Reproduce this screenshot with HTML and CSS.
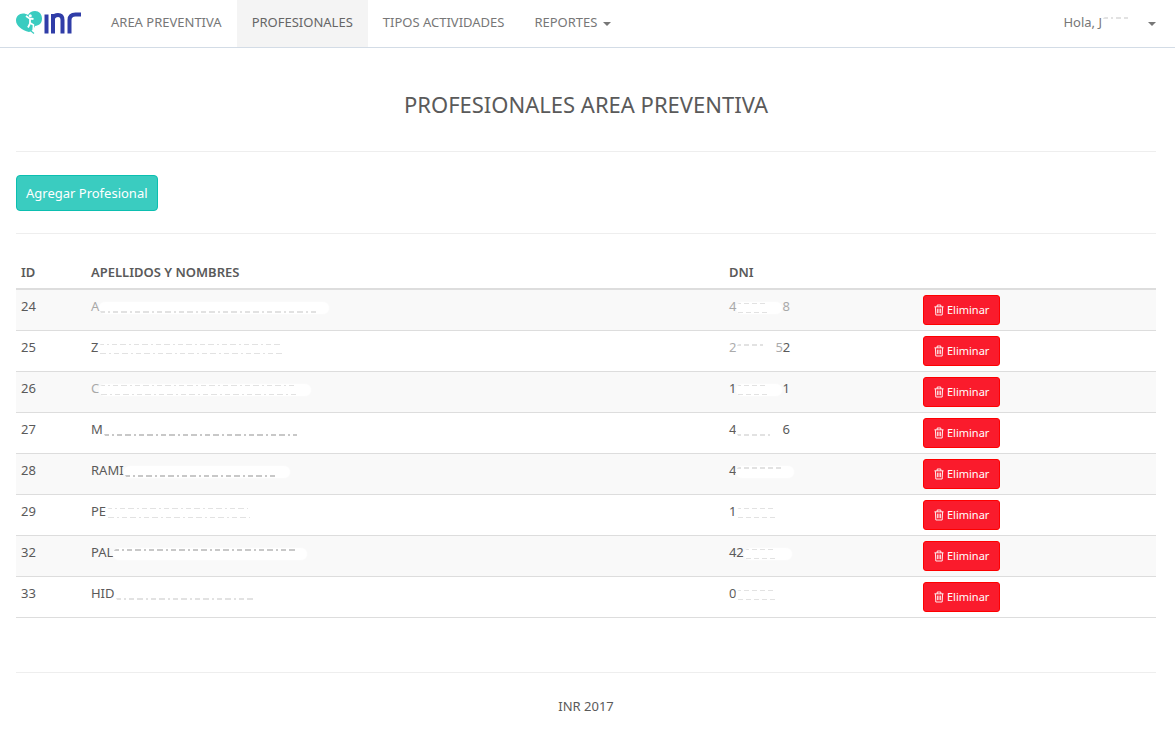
FILE: index.html
```html
<!DOCTYPE html>
<html lang="es">
<head>
<meta charset="utf-8">
<title>Profesionales Area Preventiva</title>
<link rel="stylesheet" href="styles.css">
</head>
<body>
<svg class="sprite" aria-hidden="true">
  <symbol id="trash" viewBox="0 0 11 12">
    <path d="M.5 2.5h10M3.5 2.5v-2h4v2M1.5 2.5l.5 9h7l.5-9M3.7 4.5v5M5.5 4.5v5M7.3 4.5v5" fill="none" stroke="currentColor"/>
  </symbol>
</svg>
<header class="navbar">
  <a class="brand" href="#" aria-label="INR">
    <svg class="logo" viewBox="0 0 66 26">
      <path d="M13 22C6 20 0 16 0 10.500 0 6.500 3 3.500 7 3.500c2 0 3.500.5 5 1.500 1.500-2.500 4-4 7-4 4 0 7 3 7 7.500 0 5-3 7-7 7.500l-2 4z" fill="#3accc0"/>
      <circle cx="14.300" cy="5.700" r="1.500" fill="#fff"/>
      <path d="M10 6l3.500 2.500 4 .5M14 8.500v5l-2 4" fill="none" stroke="#fff" stroke-width="1.800"/>
      <path d="M13.500 12.500l4 2.500-.5 6" fill="none" stroke="#fff" stroke-width="1.500"/>
      <path d="M12 20.500l3 .5 3 2.500" fill="none" stroke="#3accc0" stroke-width="1.200"/>
      <path d="M30.500 4.500V23.500M37 23.500V4M37 8q1.500-3 5-3 4.500 0 4.500 5v13.500M53.500 23.500V10q0-5.500 6-5.500h5.500" fill="none" stroke="#303da8" stroke-width="4"/>
    </svg>
  </a>
  <nav class="menu">
    <a class="item" href="#">AREA PREVENTIVA</a>
    <a class="item active" href="#">PROFESIONALES</a>
    <a class="item" href="#">TIPOS ACTIVIDADES</a>
    <button class="item" type="button">REPORTES<span class="caret"></span></button>
  </nav>
  <button class="item user" type="button">Hola, J<span class="erased high user-name"></span><span class="caret"></span></button>
</header>
<main class="page">
  <h1 class="title">PROFESIONALES AREA PREVENTIVA</h1>
  <hr class="rule">
  <button class="btn add" type="button">Agregar Profesional</button>
  <hr class="rule">
  <table class="table">
    <thead>
      <tr><th class="col-id">ID</th><th class="col-name">APELLIDOS Y NOMBRES</th><th class="col-dni">DNI</th><th class="col-action"></th></tr>
    </thead>
    <tbody>
      <tr><td>24</td><td><span class="faint">A</span><span class="erased low" style="width:230px"></span></td><td><span class="faint">4</span><span class="erased digits" style="width:46px"></span><span class="faint">8</span></td><td><button class="btn remove" type="button"><svg class="icon"><use href="#trash"/></svg>Eliminar</button></td></tr>
      <tr><td>25</td><td>Z<span class="erased" style="width:198px"></span></td><td><span class="faint">2</span><span class="erased high digits" style="width:39px"></span><span class="faint">5</span>2</td><td><button class="btn remove" type="button"><svg class="icon"><use href="#trash"/></svg>Eliminar</button></td></tr>
      <tr><td>26</td><td><span class="faint">C</span><span class="erased" style="width:212px"></span></td><td>1<span class="erased digits" style="width:46px"></span>1</td><td><button class="btn remove" type="button"><svg class="icon"><use href="#trash"/></svg>Eliminar</button></td></tr>
      <tr><td>27</td><td>M<span class="erased low dark" style="width:206px"></span></td><td>4<span class="erased low digits" style="width:46px"></span>6</td><td><button class="btn remove" type="button"><svg class="icon"><use href="#trash"/></svg>Eliminar</button></td></tr>
      <tr><td>28</td><td>RAMI<span class="erased low dark" style="width:166px"></span></td><td>4<span class="erased high digits" style="width:58px"></span></td><td><button class="btn remove" type="button"><svg class="icon"><use href="#trash"/></svg>Eliminar</button></td></tr>
      <tr><td>29</td><td>PE<span class="erased" style="width:158px"></span></td><td>1<span class="erased digits" style="width:54px"></span></td><td><button class="btn remove" type="button"><svg class="icon"><use href="#trash"/></svg>Eliminar</button></td></tr>
      <tr><td>32</td><td>PAL<span class="erased high dark" style="width:194px"></span></td><td>42<span class="erased digits" style="width:48px"></span></td><td><button class="btn remove" type="button"><svg class="icon"><use href="#trash"/></svg>Eliminar</button></td></tr>
      <tr><td>33</td><td>HID<span class="erased low" style="width:150px"></span></td><td>0<span class="erased digits" style="width:54px"></span></td><td><button class="btn remove" type="button"><svg class="icon"><use href="#trash"/></svg>Eliminar</button></td></tr>
    </tbody>
  </table>
</main>
<footer class="footer">
  <hr class="rule">
  <p class="credit">INR 2017</p>
</footer>
</body>
</html>
```
FILE: styles.css
```css
* { box-sizing: border-box; }
body {
  margin: 0;
  background: #fff;
  color: #5a5a5a;
  font: 13px/22px "Noto Sans", "Open Sans", sans-serif;
}
button { font: inherit; cursor: pointer; }
.sprite { position: absolute; width: 0; height: 0; }

.navbar {
  display: flex;
  padding: 0 4px 0 16px;
  border-bottom: 1px solid #d3dce6;
}
.brand { display: flex; padding-top: 10px; width: 80px; }
.logo { width: 66px; height: 26px; }
.menu { display: flex; flex: 1; }
.item {
  display: flex;
  align-items: center;
  padding: 11px 15px 14px;
  border: 0;
  background: none;
  color: #777;
  text-decoration: none;
  white-space: nowrap;
}
.active { background: #f4f4f4; color: #666; }
.caret {
  margin: 4px 0 0 6px;
  border: 4px solid transparent;
  border-top-color: currentColor;
  border-bottom: 0;
}
.user .caret { margin-left: 8px; }

.page, .footer { padding: 0 19px 0 16px; }
.title {
  margin: 0;
  padding: 41px 0 32px;
  font-size: 22px;
  line-height: 30px;
  font-weight: 400;
  text-align: center;
}
.rule { margin: 0; border: 0; border-top: 1px solid #eee; }
.btn {
  border: 1px solid;
  border-radius: 4px;
  color: #fff;
}
.add {
  display: block;
  margin: 23px 0 22px;
  padding: 6px 9px;
  background: #3accc0;
  border-color: #0cbfb0;
}
.remove {
  display: flex;
  align-items: center;
  gap: 3px;
  height: 30px;
  padding: 0 10px;
  border-radius: 3px;
  background: #fa1b2c;
  border-color: #f00;
  font-size: 11px;
  line-height: 18px;
}
.icon { width: 10px; height: 12px; }

.table {
  width: 100%;
  margin: 22px 0 54px;
  border-spacing: 0;
  table-layout: fixed;
}
.table th { padding: 5px; border-bottom: 2px solid #ddd; text-align: left; font-weight: 600; }
.table td { padding: 5px; border-bottom: 1px solid #ddd; vertical-align: top; }
.table tbody tr:nth-child(odd) { background: #f9f9f9; }
.col-id { width: 6.14%; }
.col-name { width: 55.96%; }
.col-dni { width: 17.02%; }
.col-action { width: 20.88%; }

.faint { opacity: .5; }

/* Names and document numbers wiped out, leaving only faint marks */
.erased {
  --mark: #e2e2e2;
  --marks: repeating-linear-gradient(90deg, var(--mark) 0 6px, transparent 6px 9px, var(--mark) 9px 11px, transparent 11px 14px, var(--mark) 14px 19px, transparent 19px 22px);
  display: inline-block;
  height: 12px;
  vertical-align: middle;
  border-radius: 6px;
  box-shadow: 0 0 2px #fff;
  background:
    var(--marks) 0 1px / calc(100% - 16px) 1px no-repeat,
    var(--marks) 2px 10px / calc(100% - 16px) 1px no-repeat,
    #fff;
}
.low { background: var(--marks) 0 9px / calc(100% - 12px) 2px no-repeat, #fff; }
.high { background: var(--marks) 0 1px / calc(100% - 12px) 2px no-repeat, #fff; }
.digits { --marks: repeating-linear-gradient(90deg, var(--mark) 0 5px, transparent 5px 8px); }
.dark { --mark: #c8c8c8; }
.user-name { width: 38px; }
.credit { margin: 22px 0; text-align: center; }
```
